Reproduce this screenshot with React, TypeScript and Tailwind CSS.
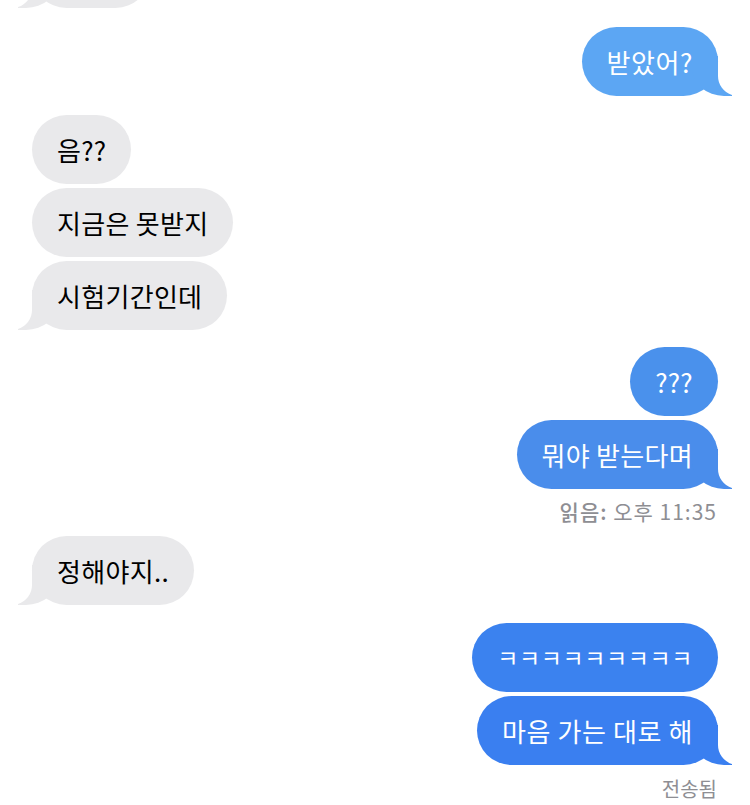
const FONT = { fontFamily: '"Noto Sans CJK KR", "Noto Sans", sans-serif' };

type Side = "in" | "out";

// iMessage style tail, drawn at the bottom corner of a bubble
const Tail = ({ side, color }: { side: Side; color: string }) => (
	<svg
		width="40"
		height="40"
		viewBox="0 0 40 40"
		className={
			side === "out"
				? "absolute -right-[14px] bottom-0"
				: "absolute -left-[14px] bottom-0 -scale-x-100"
		}
	>
		<path d="M0 0 L26 0 L26 20 A20 20 0 0 0 40 39.1 L40 40 L32 40 A32 28 0 0 1 0 12 Z" fill={color} />
	</svg>
);

const Bubble = ({
	text,
	side,
	color,
	tail,
	className = "",
}: {
	text: string;
	side: Side;
	color: string;
	tail?: boolean;
	className?: string;
}) => (
	<div
		className={`relative flex h-[69px] items-center rounded-[35px] px-[25px] text-[26px] ${
			side === "out" ? "self-end text-white" : "self-start text-black"
		} ${className}`}
		style={{ backgroundColor: color }}
	>
		{tail && <Tail side={side} color={color} />}
		<span className="relative whitespace-nowrap">{text}</span>
	</div>
);

const GRAY = "#e9e9eb";

export default function App() {
	return (
		<div className="h-[805px] w-[750px] overflow-hidden bg-white" style={FONT}>
			<div className="flex flex-col px-8">
				{/* cut-off bubble from above */}
				<div
					className="relative -mt-[61px] h-[69px] w-[118px] self-start rounded-[35px]"
					style={{ backgroundColor: GRAY }}
				>
					<Tail side="in" color={GRAY} />
				</div>

				<Bubble text="받았어?" side="out" color="#5ca6f3" tail className="mt-[19px] tracking-[0.6px]" />

				<div className="mt-[19px] flex flex-col gap-[4px] tracking-[0.3px]">
					<Bubble text="음??" side="in" color={GRAY} />
					<Bubble text="지금은 못받지" side="in" color={GRAY} />
					<Bubble text="시험기간인데" side="in" color={GRAY} tail />
				</div>

				<div className="mt-[17px] flex flex-col gap-[4px] tracking-[0.3px]">
					<Bubble text="???" side="out" color="#4a91ec" />
					<Bubble text="뭐야 받는다며" side="out" color="#4a8deb" tail />
				</div>
				<div className="mt-[10px] self-end pr-[1px] text-[21px] leading-[25px] tracking-[1px] text-[#8e8e93]">
					<span className="font-medium">읽음:</span> 오후 11:35
				</div>

				<Bubble text="정해야지.." side="in" color={GRAY} tail className="mt-[12px] tracking-[0.3px]" />

				<div className="mt-[18px] flex flex-col gap-[4px]">
					<Bubble text="ㅋㅋㅋㅋㅋㅋㅋㅋㅋ" side="out" color="#3b82ef" className="!text-[23px] tracking-[0.6px]" />
					<Bubble text="마음 가는 대로 해" side="out" color="#3a7ff0" tail className="tracking-[0.6px]" />
				</div>
				<div className="mt-[12px] self-end pr-[1px] text-[20px] leading-[24px] text-[#8e8e93]">
					전송됨
				</div>
			</div>
		</div>
	);
}
